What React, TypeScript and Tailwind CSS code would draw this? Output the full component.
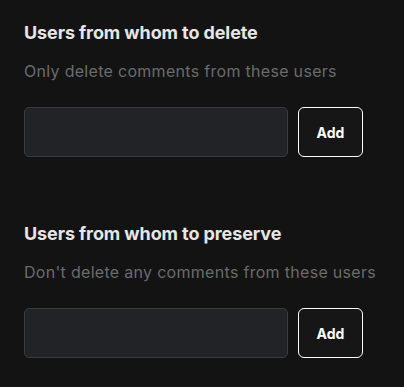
import { useState } from "react";

type Section = {
  id: string;
  title: string;
  hint: string;
};

const sections: Section[] = [
  {
    id: "delete",
    title: "Users from whom to delete",
    hint: "Only delete comments from these users",
  },
  {
    id: "preserve",
    title: "Users from whom to preserve",
    hint: "Don't delete any comments from these users",
  },
];

function UserList({ section }: { section: Section }) {
  const [value, setValue] = useState("");

  return (
    <div>
      <h2 className="text-[18px] leading-[24px] font-bold tracking-[-0.1px] text-[#e6e6e6]">
        {section.title}
      </h2>

      <p className="mt-[16px] text-[16px] leading-[20px] tracking-[0.3px] text-[#6b6b6b]">
        {section.hint}
      </p>

      <div className="mt-[26px] flex gap-[10px]">
        <input
          value={value}
          onChange={e => setValue(e.target.value)}
          className="h-[50px] w-[264px] rounded-[5px] border border-[#3a3b3f] bg-[#222327] px-3 text-sm text-white outline-none"
        />
        <button className="h-[50px] w-[65px] rounded-[6px] border border-white bg-[#161616] text-[14px] font-bold text-white">
          Add
        </button>
      </div>
    </div>
  );
}

export default function App() {
  return (
    <div
      className="min-h-[387px] bg-[#131313] px-6 pt-[21px]"
      style={{ fontFamily: "Inter, 'Noto Sans', sans-serif" }}
    >
      <div className="flex flex-col gap-[65px]">
        {sections.map(section => (
          <UserList key={section.id} section={section} />
        ))}
      </div>
    </div>
  );
}
